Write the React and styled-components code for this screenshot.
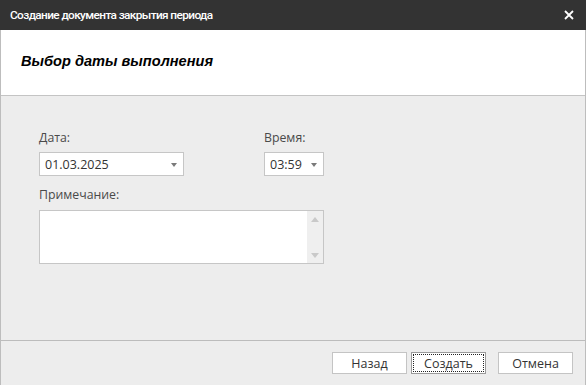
import React from "react";
import styled, { createGlobalStyle } from "styled-components";

const Global = createGlobalStyle`
  html, body { margin: 0; padding: 0; background: #ededed; }
  body { font-family: "Open Sans", "Noto Sans", sans-serif; }
  * { box-sizing: border-box; }
`;

const Window = styled.div`
  width: 586px;
  height: 385px;
  display: flex;
  flex-direction: column;
  background: #ededed;
  overflow: hidden;
`;

const TitleBar = styled.div`
  height: 30px;
  flex: none;
  background: #333333;
  color: #ffffff;
  display: flex;
  align-items: center;
  justify-content: space-between;
  padding: 0 10px 0 10px;
  font-family: Roboto, "Open Sans", sans-serif;
  font-size: 11.8px;
  font-weight: 500;
  letter-spacing: -0.6px;
`;

const CloseBtn = styled.button`
  border: 0;
  background: transparent;
  padding: 0;
  width: 12px;
  height: 12px;
  display: flex;
  align-items: center;
  justify-content: center;
  margin-right: 1px;
`;

const Frame = styled.div`
  flex: 1;
  display: flex;
  flex-direction: column;
  border-left: 1px solid #bdbdbd;
  border-right: 1px solid #bdbdbd;
`;

const Header = styled.div`
  height: 66px;
  flex: none;
  background: #ffffff;
  border-bottom: 1px solid #c4c4c4;
  display: flex;
  align-items: center;
  padding-left: 20px;
  padding-bottom: 3px;
  font-family: "Liberation Sans", Arial, sans-serif;
  font-weight: bold;
  font-style: italic;
  font-size: 14.6px;
  color: #000;
`;

const Body = styled.div`
  flex: 1;
  padding: 33px 0 0 38px;
`;

const Form = styled.div`
  display: grid;
  grid-template-columns: 145px 80px 60px;
  grid-template-rows: auto auto auto auto;
  width: 285px;
`;

const Label = styled.div`
  grid-column: ${(p) => p.$col || "auto"};
  font-size: 12.3px;
  line-height: 18px;
  color: #4a4a4a;
  margin-bottom: ${(p) => p.$mb || 5}px;
  margin-top: ${(p) => p.$mt || 0}px;
`;

const Select = styled.div`
  grid-column: ${(p) => p.$col || "auto"};
  height: 24px;
  background: #fff;
  border: 1px solid #c6c6c6;
  display: flex;
  align-items: center;
  justify-content: space-between;
  padding: 0 6px 0 5px;
  font-size: 12.5px;
  color: #333;
`;

const Arrow = styled.span`
  width: 0;
  height: 0;
  border-left: 3.5px solid transparent;
  border-right: 3.5px solid transparent;
  border-top: 4px solid #7a7a7a;
  margin-top: 1px;
`;

const TextArea = styled.div`
  grid-column: 1 / 4;
  height: 54px;
  background: #fff;
  border: 1px solid #c6c6c6;
  display: flex;
  justify-content: flex-end;
`;

const Scroll = styled.div`
  width: 16px;
  background: #efefef;
  display: flex;
  flex-direction: column;
  justify-content: space-between;
  align-items: center;
  padding: 6px 0 5px;
`;

const SArrow = styled.span`
  width: 0;
  height: 0;
  border-left: 4px solid transparent;
  border-right: 4px solid transparent;
  ${(p) =>
    p.$up
      ? "border-bottom: 5px solid #c9c9c9;"
      : "border-top: 5px solid #c9c9c9;"}
`;

const Footer = styled.div`
  height: 45px;
  flex: none;
  border-top: 1px solid #bcbcbc;
  display: flex;
  justify-content: flex-end;
  align-items: flex-start;
  padding: 11px 12px 0 0;
`;

const Button = styled.button`
  width: 75px;
  height: 22px;
  margin-left: ${(p) => p.$ml || 0}px;
  background: #fff;
  border: 1px solid ${(p) => (p.$focus ? "#9a9a9a" : "#c4c4c4")};
  font-family: "Open Sans", "Noto Sans", sans-serif;
  font-size: 12.5px;
  color: #333;
  padding: 0;
  position: relative;
  display: flex;
  align-items: center;
  justify-content: center;
  ${(p) =>
    p.$focus &&
    `outline: 1px dotted #222; outline-offset: -3px;`}
`;

export default function App() {
  return (
    <Window>
      <Global />
      <TitleBar>
        <span>Создание документа закрытия периода</span>
        <CloseBtn aria-label="close">
          <svg width="10" height="10" viewBox="0 0 10 10">
            <path d="M1 1 L9 9 M9 1 L1 9" stroke="#fff" strokeWidth="1.8" />
          </svg>
        </CloseBtn>
      </TitleBar>
      <Frame>
        <Header>Выбор даты выполнения</Header>
        <Body>
          <Form>
            <Label $col="1">Дата:</Label>
            <Label $col="3">Время:</Label>
            <Select $col="1">
              <span>01.03.2025</span>
              <Arrow />
            </Select>
            <Select $col="3">
              <span>03:59</span>
              <Arrow />
            </Select>
            <Label $col="1 / 4" $mt={10} $mb={6}>
              Примечание:
            </Label>
            <TextArea>
              <Scroll>
                <SArrow $up />
                <SArrow />
              </Scroll>
            </TextArea>
          </Form>
        </Body>
        <Footer>
          <Button>Назад</Button>
          <Button $ml={4} $focus>
            Создать
          </Button>
          <Button $ml={12}>Отмена</Button>
        </Footer>
      </Frame>
    </Window>
  );
}
